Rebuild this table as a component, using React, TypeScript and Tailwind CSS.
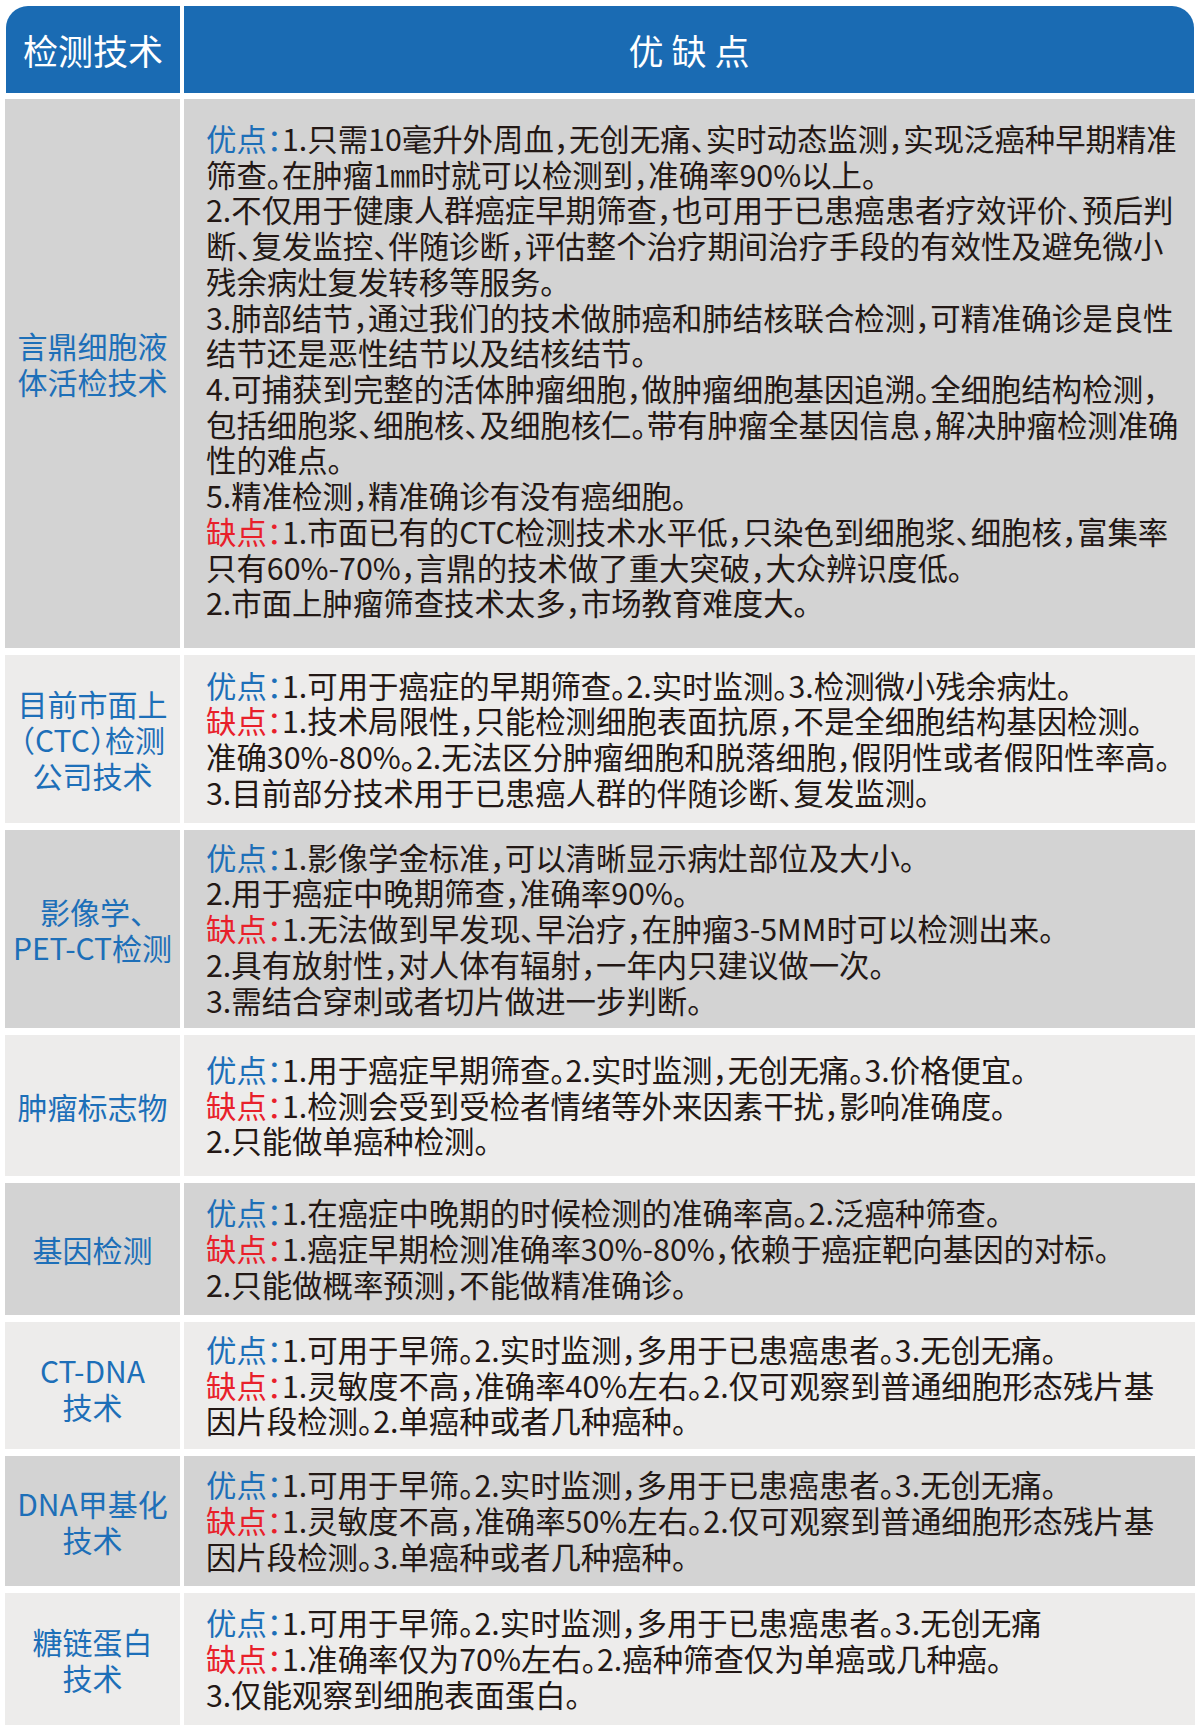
import React from 'react';

type Line = { tag?: 'pro' | 'con'; text: string };
type Row = { h: string; bg: string; label: string[]; lines: Line[]; labelPad?: string; contentPad?: string };

const GRAY = 'bg-[#d3d3d3]';
const LIGHT = 'bg-[#edeceb]';

const rows: Row[] = [
  {
    h: 'h-[549px]',
    bg: GRAY,
    labelPad: 'pb-[22px]',
    contentPad: 'pb-[5px]',
    label: ['言鼎细胞液', '体活检技术'],
    lines: [
      { tag: 'pro', text: '1.只需10毫升外周血，无创无痛、实时动态监测，实现泛癌种早期精准' },
      { text: '筛查。在肿瘤1㎜时就可以检测到，准确率90%以上。' },
      { text: '2.不仅用于健康人群癌症早期筛查，也可用于已患癌患者疗效评价、预后判' },
      { text: '断、复发监控、伴随诊断，评估整个治疗期间治疗手段的有效性及避免微小' },
      { text: '残余病灶复发转移等服务。' },
      { text: '3.肺部结节，通过我们的技术做肺癌和肺结核联合检测，可精准确诊是良性' },
      { text: '结节还是恶性结节以及结核结节。' },
      { text: '4.可捕获到完整的活体肿瘤细胞，做肿瘤细胞基因追溯。全细胞结构检测，' },
      { text: '包括细胞浆、细胞核、及细胞核仁。带有肿瘤全基因信息，解决肿瘤检测准确' },
      { text: '性的难点。' },
      { text: '5.精准检测，精准确诊有没有癌细胞。' },
      { tag: 'con', text: '1.市面已有的CTC检测技术水平低，只染色到细胞浆、细胞核，富集率' },
      { text: '只有60%-70%，言鼎的技术做了重大突破，大众辨识度低。' },
      { text: '2.市面上肿瘤筛查技术太多，市场教育难度大。' },
    ],
  },
  {
    h: 'h-[168px]',
    bg: LIGHT,
    label: ['目前市面上', '（CTC）检测', '公司技术'],
    lines: [
      { tag: 'pro', text: '1.可用于癌症的早期筛查。2.实时监测。3.检测微小残余病灶。' },
      { tag: 'con', text: '1.技术局限性，只能检测细胞表面抗原，不是全细胞结构基因检测。' },
      { text: '准确30%-80%。2.无法区分肿瘤细胞和脱落细胞，假阴性或者假阳性率高。' },
      { text: '3.目前部分技术用于已患癌人群的伴随诊断、复发监测。' },
    ],
  },
  {
    h: 'h-[198px]',
    bg: GRAY,
    label: ['影像学、', 'PET-CT检测'],
    lines: [
      { tag: 'pro', text: '1.影像学金标准，可以清晰显示病灶部位及大小。' },
      { text: '2.用于癌症中晚期筛查，准确率90%。' },
      { tag: 'con', text: '1.无法做到早发现、早治疗，在肿瘤3-5MM时可以检测出来。' },
      { text: '2.具有放射性，对人体有辐射，一年内只建议做一次。' },
      { text: '3.需结合穿刺或者切片做进一步判断。' },
    ],
  },
  {
    h: 'h-[141px]',
    bg: LIGHT,
    label: ['肿瘤标志物'],
    lines: [
      { tag: 'pro', text: '1.用于癌症早期筛查。2.实时监测，无创无痛。3.价格便宜。' },
      { tag: 'con', text: '1.检测会受到受检者情绪等外来因素干扰，影响准确度。' },
      { text: '2.只能做单癌种检测。' },
    ],
  },
  {
    h: 'h-[132px]',
    bg: GRAY,
    label: ['基因检测'],
    lines: [
      { tag: 'pro', text: '1.在癌症中晚期的时候检测的准确率高。2.泛癌种筛查。' },
      { tag: 'con', text: '1.癌症早期检测准确率30%-80%，依赖于癌症靶向基因的对标。' },
      { text: '2.只能做概率预测，不能做精准确诊。' },
    ],
  },
  {
    h: 'h-[127px]',
    bg: LIGHT,
    labelPad: 'pt-[4px]',
    label: ['CT-DNA', '技术'],
    lines: [
      { tag: 'pro', text: '1.可用于早筛。2.实时监测，多用于已患癌患者。3.无创无痛。' },
      { tag: 'con', text: '1.灵敏度不高，准确率40%左右。2.仅可观察到普通细胞形态残片基' },
      { text: '因片段检测。2.单癌种或者几种癌种。' },
    ],
  },
  {
    h: 'h-[130px]',
    bg: GRAY,
    label: ['DNA甲基化', '技术'],
    lines: [
      { tag: 'pro', text: '1.可用于早筛。2.实时监测，多用于已患癌患者。3.无创无痛。' },
      { tag: 'con', text: '1.灵敏度不高，准确率50%左右。2.仅可观察到普通细胞形态残片基' },
      { text: '因片段检测。3.单癌种或者几种癌种。' },
    ],
  },
  {
    h: 'h-[132px]',
    bg: LIGHT,
    label: ['糖链蛋白', '技术'],
    lines: [
      { tag: 'pro', text: '1.可用于早筛。2.实时监测，多用于已患癌患者。3.无创无痛' },
      { tag: 'con', text: '1.准确率仅为70%左右。2.癌种筛查仅为单癌或几种癌。' },
      { text: '3.仅能观察到细胞表面蛋白。' },
    ],
  },
];

function ContentLine({ line }: { line: Line }) {
  return (
    <div className="whitespace-nowrap">
      {line.tag === 'pro' && <span className="text-[#1d6fb8]">优点：</span>}
      {line.tag === 'con' && <span className="text-[#e8202a]">缺点：</span>}
      {line.text}
    </div>
  );
}

export default function App() {
  return (
    <div className="w-[1200px] h-[1730px] bg-white pt-[6px] px-[5px] font-['Noto_Sans_CJK_SC','Noto_Sans',sans-serif] [font-feature-settings:'halt']">
      {/* header */}
      <div className="flex gap-[4px] h-[87px] px-[1px]">
        <div className="w-[174px] bg-[#1a6bb3] rounded-tl-[22px] flex items-center justify-center text-white text-[35px] leading-none">
          检测技术
        </div>
        <div className="flex-1 bg-[#1a6bb3] rounded-tr-[22px] flex items-center justify-center text-white text-[35px] leading-none tracking-[8px] pl-[8px]">
          优缺点
        </div>
      </div>
      <div className="flex flex-col gap-[7px] mt-[6px]">
        {rows.map((r, i) => (
          <div key={i} className={`flex gap-[4px] ${r.h}`}>
            <div
              className={`w-[175px] ${r.bg} ${r.labelPad ?? ''} flex flex-col items-center justify-center text-center text-[#1d6fb8] text-[30px] leading-[36px]`}
            >
              {r.label.map((l, j) => (
                <div key={j} className="whitespace-nowrap">
                  {l}
                </div>
              ))}
            </div>
            <div
              className={`flex-1 ${r.bg} ${r.contentPad ?? ''} flex flex-col justify-center pl-[22px] text-[#231815] text-[30.4px] leading-[35.7px]`}
            >
              {r.lines.map((l, j) => (
                <ContentLine key={j} line={l} />
              ))}
            </div>
          </div>
        ))}
      </div>
    </div>
  );
}
